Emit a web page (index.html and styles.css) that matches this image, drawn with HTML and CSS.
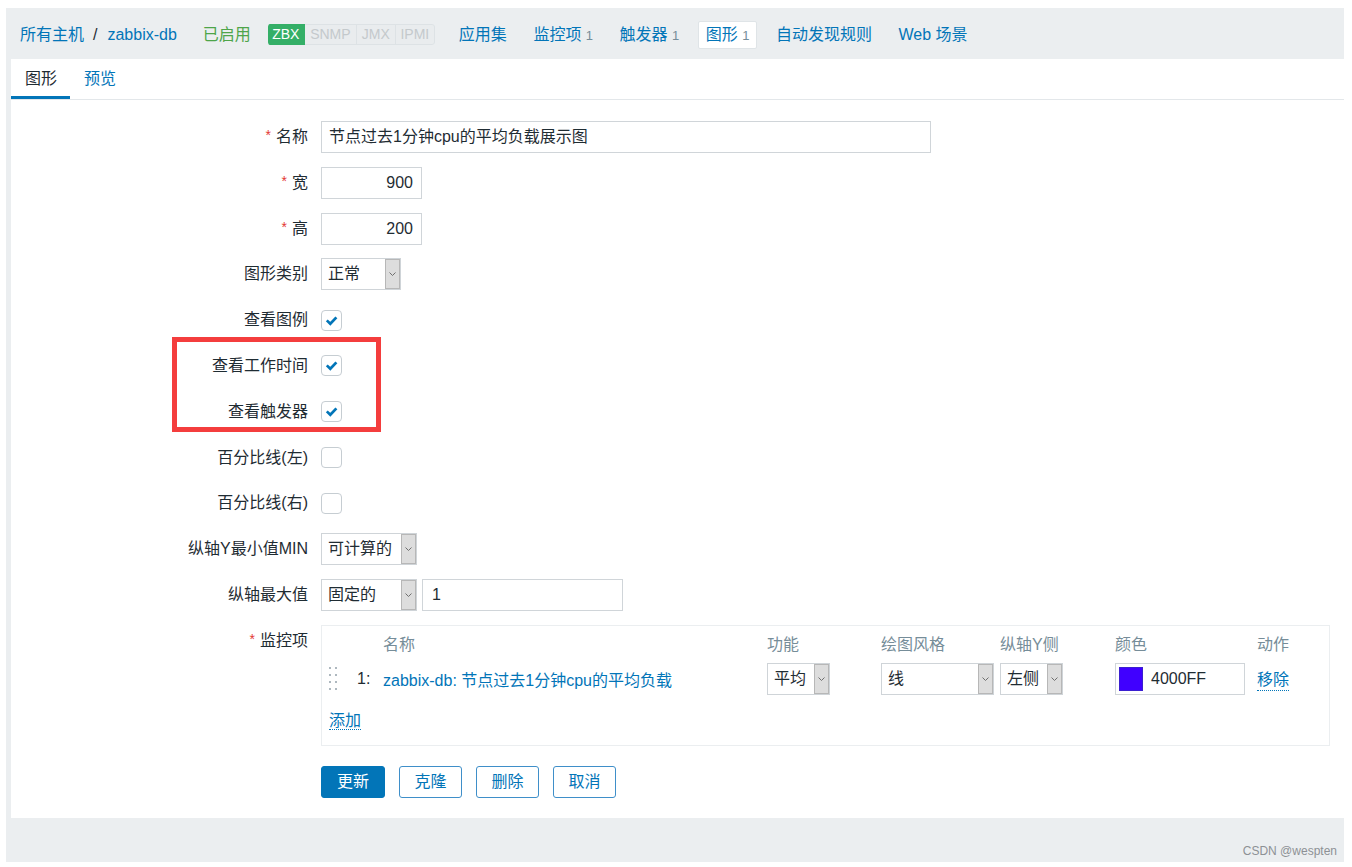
FILE: index.html
```html
<!DOCTYPE html>
<html lang="zh-CN">
<head>
<meta charset="utf-8">
<title>图形 - zabbix-db</title>
<link rel="stylesheet" href="styles.css">
</head>
<body>
<div class="page">
  <nav class="hostnav">
    <div class="crumbs"><a class="lnk">所有主机</a><span class="sep">/</span><a class="lnk">zabbix-db</a></div>
    <span class="status-on">已启用</span>
    <div class="badges"><span class="badge on b-zbx">ZBX</span><span class="badge b-snmp">SNMP</span><span class="badge b-jmx">JMX</span><span class="badge b-ipmi">IPMI</span></div>
    <ul class="navlist">
      <li class="navitem"><a>应用集</a></li>
      <li class="navitem"><a>监控项</a> <span class="cnt">1</span></li>
      <li class="navitem"><a>触发器</a> <span class="cnt">1</span></li>
      <li class="navitem active"><a>图形</a> <span class="cnt">1</span></li>
      <li class="navitem"><a>自动发现规则</a></li>
      <li class="navitem"><a>Web 场景</a></li>
    </ul>
  </nav>

  <main class="panel">
    <div class="tabs">
      <span class="tab active">图形</span>
      <span class="tab"><a>预览</a></span>
    </div>

    <div class="form">
      <div class="row">
        <label class="lbl req">名称</label>
        <div class="fld"><div class="input w-name">节点过去1分钟cpu的平均负载展示图</div></div>
      </div>
      <div class="row">
        <label class="lbl req">宽</label>
        <div class="fld"><div class="input w-num">900</div></div>
      </div>
      <div class="row">
        <label class="lbl req">高</label>
        <div class="fld"><div class="input w-num">200</div></div>
      </div>
      <div class="row">
        <label class="lbl">图形类别</label>
        <div class="fld"><div class="select w-type"><span class="val">正常</span><span class="arr"><svg width="7" height="4" viewBox="0 0 7 4"><polyline points="0.5,0.5 3.5,3.5 6.5,0.5" fill="none" stroke="#6f6f6f" stroke-width="1"/></svg></span></div></div>
      </div>
      <div class="row">
        <label class="lbl">查看图例</label>
        <div class="fld"><span class="cb"><svg width="19" height="19" viewBox="0 0 19 19"><path d="M4.8 9.4 L8.3 12.8 L14.4 6.4" fill="none" stroke="#0275b8" stroke-width="2.7"/></svg></span></div>
      </div>
      <div class="row">
        <label class="lbl">查看工作时间</label>
        <div class="fld"><span class="cb"><svg width="19" height="19" viewBox="0 0 19 19"><path d="M4.8 9.4 L8.3 12.8 L14.4 6.4" fill="none" stroke="#0275b8" stroke-width="2.7"/></svg></span></div>
      </div>
      <div class="row">
        <label class="lbl">查看触发器</label>
        <div class="fld"><span class="cb"><svg width="19" height="19" viewBox="0 0 19 19"><path d="M4.8 9.4 L8.3 12.8 L14.4 6.4" fill="none" stroke="#0275b8" stroke-width="2.7"/></svg></span></div>
      </div>
      <div class="row">
        <label class="lbl">百分比线(左)</label>
        <div class="fld"><span class="cb"></span></div>
      </div>
      <div class="row">
        <label class="lbl">百分比线(右)</label>
        <div class="fld"><span class="cb"></span></div>
      </div>
      <div class="row">
        <label class="lbl">纵轴Y最小值MIN</label>
        <div class="fld"><div class="select w-axis"><span class="val">可计算的</span><span class="arr"><svg width="7" height="4" viewBox="0 0 7 4"><polyline points="0.5,0.5 3.5,3.5 6.5,0.5" fill="none" stroke="#6f6f6f" stroke-width="1"/></svg></span></div></div>
      </div>
      <div class="row">
        <label class="lbl">纵轴最大值</label>
        <div class="fld inline">
          <div class="select w-axis"><span class="val">固定的</span><span class="arr"><svg width="7" height="4" viewBox="0 0 7 4"><polyline points="0.5,0.5 3.5,3.5 6.5,0.5" fill="none" stroke="#6f6f6f" stroke-width="1"/></svg></span></div>
          <div class="input w-max">1</div>
        </div>
      </div>
      <div class="row top">
        <label class="lbl req">监控项</label>
        <div class="fld">
          <div class="items">
            <span class="th c-name">名称</span>
            <span class="th">功能</span>
            <span class="th">绘图风格</span>
            <span class="th">纵轴Y侧</span>
            <span class="th">颜色</span>
            <span class="th">动作</span>

            <span class="drag"><svg width="9" height="25" viewBox="0 0 9 25" fill="#aeb8bf"><rect x="0" y="1" width="2" height="2"/><rect x="6" y="1" width="2" height="2"/><rect x="0" y="8" width="2" height="2"/><rect x="6" y="8" width="2" height="2"/><rect x="0" y="15" width="2" height="2"/><rect x="6" y="15" width="2" height="2"/><rect x="0" y="22" width="2" height="2"/><rect x="6" y="22" width="2" height="2"/></svg></span>
            <span class="num">1:</span>
            <a class="item-link">zabbix-db: 节点过去1分钟cpu的平均负载</a>
            <div class="select w-func"><span class="val">平均</span><span class="arr"><svg width="7" height="4" viewBox="0 0 7 4"><polyline points="0.5,0.5 3.5,3.5 6.5,0.5" fill="none" stroke="#6f6f6f" stroke-width="1"/></svg></span></div>
            <div class="select w-style"><span class="val">线</span><span class="arr"><svg width="7" height="4" viewBox="0 0 7 4"><polyline points="0.5,0.5 3.5,3.5 6.5,0.5" fill="none" stroke="#6f6f6f" stroke-width="1"/></svg></span></div>
            <div class="select w-side"><span class="val">左侧</span><span class="arr"><svg width="7" height="4" viewBox="0 0 7 4"><polyline points="0.5,0.5 3.5,3.5 6.5,0.5" fill="none" stroke="#6f6f6f" stroke-width="1"/></svg></span></div>
            <div class="color-input"><span class="swatch"></span><span>4000FF</span></div>
            <a class="dotted">移除</a>

            <div class="add-row"><a class="dotted">添加</a></div>
          </div>
        </div>
      </div>
      <div class="row buttons-row">
        <span></span>
        <div class="fld buttons">
          <button class="btn primary" type="button">更新</button>
          <button class="btn alt" type="button">克隆</button>
          <button class="btn alt" type="button">删除</button>
          <button class="btn alt" type="button">取消</button>
        </div>
      </div>
    </div>

    <div class="annot"></div>
  </main>

  <footer class="foot">CSDN @wespten</footer>
</div>
</body>
</html>
```

FILE: styles.css
```css
* { box-sizing: border-box; }

html, body {
  margin: 0;
  padding: 0;
  background: #ffffff;
}

body {
  font-family: "Liberation Sans", "Noto Sans CJK SC", sans-serif;
  font-size: 16px;
  color: #1f2c33;
}

a {
  color: #0275b8;
  text-decoration: none;
  cursor: pointer;
}

.page {
  margin: 8px 0 0 6px;
  width: 1338px;
  height: 854px;
  background: #ebeef0;
  display: flex;
  flex-direction: column;
}

/* ---------- host navigation ---------- */
.hostnav {
  height: 51px;
  flex: none;
  display: flex;
  align-items: center;
  padding: 2px 0 0 14px;
  line-height: 20px;
}

.crumbs {
  display: flex;
  align-items: center;
}

.sep {
  color: #1f2c33;
  margin: 0 10px 0 9px;
}

.status-on {
  margin-left: 26px;
  color: #4ea54a;
}

.badges {
  margin-left: 17px;
  display: flex;
  height: 21px;
  border-radius: 3px;
  overflow: hidden;
  font-size: 14px;
  line-height: 19px;
}

.badge {
  text-align: center;
  border: 1px solid #dde2e5;
  border-left-width: 0;
  background: #e9ecee;
  color: #c4c9cc;
}

.badge.on {
  background: #34af67;
  border-color: #34af67;
  color: #ffffff;
}

.b-zbx { width: 37px; }
.b-snmp { width: 52px; }
.b-jmx { width: 39px; }
.b-ipmi { width: 39px; }

.badge:last-child {
  border-radius: 0 3px 3px 0;
}

.navlist {
  list-style: none;
  margin: 0 0 0 16px;
  padding: 0;
  display: flex;
  gap: 10.5px;
}

.navitem {
  padding: 3px 7px;
  border: 1px solid transparent;
  border-radius: 2px;
  line-height: 19px;
  white-space: nowrap;
}

.navitem.active {
  background: #ffffff;
  border-color: #dfe4e7;
}

.cnt {
  font-size: 13px;
  color: #768d99;
}

/* ---------- panel ---------- */
.panel {
  position: relative;
  flex: none;
  margin-left: 5px;
  width: 1333px;
  background: #ffffff;
  padding-bottom: 20px;
}

.tabs {
  display: flex;
  height: 41px;
  border-bottom: 1px solid #e3e7ea;
}

.tab {
  height: 40px;
  padding: 3px 13px 0 14px;
  line-height: 34px;
  border-bottom: 3px solid transparent;
}

.tab.active {
  border-bottom-color: #0275b8;
  color: #1f2c33;
}

/* ---------- form ---------- */
.form {
  display: flex;
  flex-direction: column;
  gap: 13.8px;
  padding: 21px 14px 0 0;
}

.row {
  display: grid;
  grid-template-columns: 297px 1fr;
  column-gap: 13px;
  align-items: center;
  min-height: 32px;
}

.row.top {
  align-items: start;
}

.row.top .lbl {
  line-height: 32px;
}

.lbl {
  text-align: right;
  line-height: 20px;
  white-space: nowrap;
}

.lbl.req::before {
  content: "*";
  color: #e33734;
  font-size: 14px;
  margin-right: 5px;
  position: relative;
  top: -2px;
}

.fld {
  display: flex;
  align-items: center;
}

.fld.inline {
  gap: 5px;
}

.input {
  height: 32px;
  border: 1px solid #d0d5d9;
  padding: 0 7px;
  line-height: 30px;
  background: #ffffff;
  white-space: nowrap;
}

.w-name { width: 610px; }
.w-num { width: 101px; text-align: right; padding-right: 8px; }
.w-max { width: 201px; padding-left: 9px; }

.select {
  display: flex;
  height: 32px;
  border: 1px solid #cfd4d8;
  background: #ffffff;
}

.select .val {
  flex: 1;
  padding-left: 6px;
  line-height: 30px;
  white-space: nowrap;
}

.select .arr {
  width: 15px;
  flex: none;
  background: #dddddd;
  border: 1px solid #b7b7b7;
  display: flex;
  align-items: center;
  justify-content: center;
}

.w-type { width: 80px; }
.w-axis { width: 96px; }
.w-func { width: 63px; }
.w-style { width: 113px; }
.w-side { width: 63px; }

.cb {
  width: 21px;
  height: 21px;
  border: 1px solid #c6cdd2;
  border-radius: 4px;
  background: #ffffff;
  display: block;
}

.cb svg {
  display: block;
}

/* ---------- items table ---------- */
.items {
  width: 100%;
  border: 1px solid #ebeef0;
  padding: 7px 0 12px 7px;
  display: grid;
  grid-template-columns: 28px 26px 384px 114px 119px 115px 142px 1fr;
  row-gap: 6px;
  align-items: center;
}

.th {
  color: #768d99;
  line-height: 24px;
}

.th.c-name {
  grid-column: 3;
}

.drag {
  display: flex;
  align-items: center;
  height: 32px;
}

.num {
  line-height: 20px;
}

.item-link {
  line-height: 20px;
  position: relative;
  top: 2px;
  white-space: nowrap;
}

.color-input {
  width: 130px;
  height: 32px;
  border: 1px solid #d0d5d9;
  display: flex;
  align-items: center;
  gap: 8px;
  padding-left: 3px;
  line-height: 20px;
}

.swatch {
  width: 24px;
  height: 24px;
  background: #4000ff;
  border: 1px solid #3a1fd0;
}

.dotted {
  border-bottom: 1px dotted #0275b8;
  line-height: 20px;
}

.items > .dotted {
  justify-self: start;
  position: relative;
  top: 2px;
}

.add-row {
  grid-column: 1 / -1;
  padding-top: 8px;
  line-height: 24px;
}

/* ---------- buttons ---------- */
.buttons-row {
  margin-top: 6px;
}

.buttons {
  gap: 14px;
}

.btn {
  width: 64px;
  height: 32px;
  border-radius: 3px;
  font-family: "Liberation Sans", "Noto Sans CJK SC", sans-serif;
  font-size: 16px;
  line-height: 20px;
  padding: 0;
  cursor: pointer;
}

.btn.primary {
  background: #0275b8;
  border: 1px solid #0275b8;
  color: #ffffff;
}

.btn.alt {
  width: 63px;
  background: #ffffff;
  border: 1px solid #3f8fc9;
  color: #0275b8;
}

/* ---------- annotation ---------- */
.annot {
  position: absolute;
  left: 161px;
  top: 278px;
  width: 209px;
  height: 95px;
  border: 5px solid #f43d3d;
  pointer-events: none;
}

/* ---------- footer ---------- */
.foot {
  flex: 1;
  display: flex;
  justify-content: flex-end;
  align-items: flex-end;
  padding: 0 7px 4px 0;
  font-size: 12px;
  line-height: 14px;
  color: #8d9195;
}
```
